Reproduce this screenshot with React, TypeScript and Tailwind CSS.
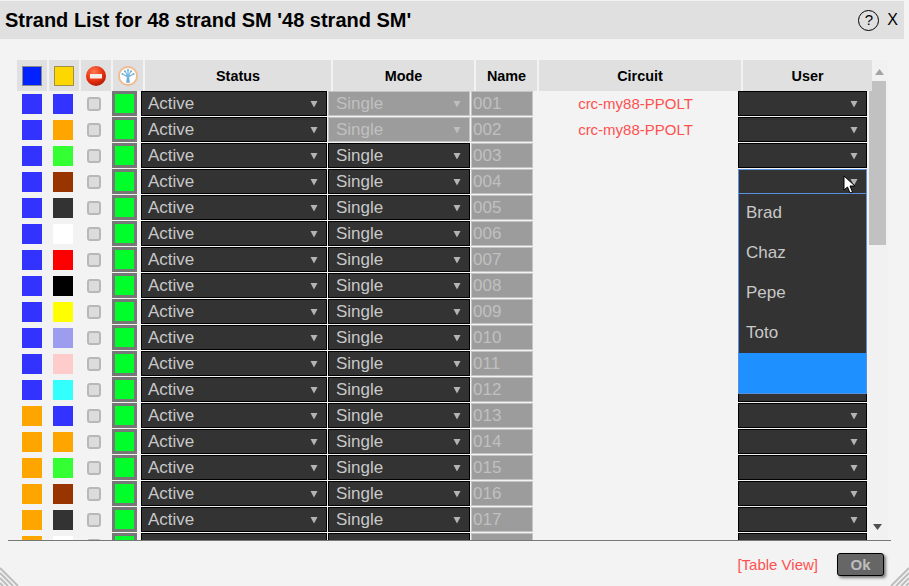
const fibers = ['#3333ff', '#ffa500', '#33ff33', '#993300'];
const tubes = ['#3333ff', '#ffa500', '#33ff33', '#993300', '#333333', '#ffffff', '#ff0000', '#000000', '#ffff00', '#9d9df0', '#ffcccc', '#33ffff'];

// only 17 rows fit, the 18th just peeks in under them with no text showing
const strands = Array.from({ length: 18 }, (_, i) => ({
  name: i < 17 ? String(i + 1).padStart(3, '0') : '',
  outer: fibers[Math.floor(i / 12)],
  inner: tubes[i % 12],
  circuit: i < 2 ? 'crc-my88-PPOLT' : '',
  locked: i < 2,
  focused: i === 3,
  peek: i === 17,
}));

function Arrow({ color = '#b4b4b4' }: { color?: string }) {
  return (
    <svg width="8" height="8" viewBox="0 0 8 8" className="shrink-0">
      <polygon points="0.5,1 7.5,1 4,7.500" fill={color} />
    </svg>
  );
}

function Select({ label, width, inset = 'pl-[6px]', locked, focused, bare }: { label?: string; width: string; inset?: string; locked?: boolean; focused?: boolean; bare?: boolean }) {
  const tone = locked
    ? 'bg-[#9c9c9c] border-[#c4c4c4] text-[#c0c0c0]'
    : focused
      ? 'bg-[#333333] border-[#5b8fe0] text-[#c8c8c8]'
      : 'bg-[#333333] border-black text-[#c8c8c8]';
  return (
    <div className={`${width} ${tone} ${inset} h-[25px] shrink-0 border flex items-center justify-between pr-[8px] text-[17px]`}>
      <span>{bare ? '' : label}</span>
      {!bare && <Arrow color={locked ? '#bdbdbd' : '#b4b4b4'} />}
    </div>
  );
}

function IconCell({ children }: { children: React.ReactNode }) {
  return <div className="w-[30px] h-[31px] shrink-0 bg-[#e0e0e0] flex items-center justify-center">{children}</div>;
}

function HeadCell({ width, children }: { width: string; children: React.ReactNode }) {
  return (
    <div className={`${width} h-[31px] shrink-0 bg-[#e0e0e0] flex items-center justify-center text-[14.4px] font-bold text-black`}>
      <span className="pt-[2px]">{children}</span>
    </div>
  );
}

function NoEntryIcon() {
  return (
    <svg width="20" height="20" viewBox="0 0 20 20">
      <defs>
        <radialGradient id="red" cx="40%" cy="30%" r="75%">
          <stop offset="0%" stopColor="#ff7a50" />
          <stop offset="60%" stopColor="#e8300f" />
          <stop offset="100%" stopColor="#a81806" />
        </radialGradient>
      </defs>
      <circle cx="10" cy="10" r="10" fill="url(#red)" />
      <rect x="4" y="8" width="12" height="4.5" fill="#f4eeea" />
    </svg>
  );
}

function TreeIcon() {
  return (
    <svg width="20" height="20" viewBox="0 0 20 20">
      <circle cx="10" cy="10" r="9" fill="#ffffff" stroke="#f2b98a" strokeWidth="1.800" />
      <path d="M8.500 16.500L9.200 11L5 8.500L9.300 9.800L7.500 6L9.800 9.300L10 4.500L10.200 9.300L12.500 6L10.700 9.800L15 8.500L10.800 11L11.500 16.500Z" fill="#6fb1de" stroke="#6fb1de" strokeWidth="0.700" />
      <g fill="#6fb1de">
        <circle cx="4.500" cy="8" r="1.100" />
        <circle cx="15.500" cy="8" r="1.100" />
        <circle cx="7" cy="5.300" r="1.100" />
        <circle cx="13" cy="5.300" r="1.100" />
        <circle cx="10" cy="4" r="1.100" />
      </g>
    </svg>
  );
}

function Hatch({ flip }: { flip?: boolean }) {
  return (
    <svg width="19" height="19" viewBox="0 0 19 19" className={`absolute bottom-0 ${flip ? 'right-0' : 'left-0 -scale-x-100'}`}>
      <path d="M19 1L1 19M19 6L6 19M19 11L11 19M19 16L16 19" stroke="#bdbdbd" strokeWidth="2" />
    </svg>
  );
}

export default function App() {
  return (
    <div className="relative w-[909px] h-[586px] overflow-hidden bg-[#f3f3f3] font-['Liberation_Sans',Arial,sans-serif] flex flex-col">
      <div className="mt-px mr-[5px] h-[38px] shrink-0 bg-[#e0e0e0] flex items-center pl-[5px] pr-[6px]">
        <h1 className="flex-1 text-[20px] font-bold text-black">Strand List for 48 strand SM '48 strand SM'</h1>
        <div className="w-[21px] h-[21px] rounded-full border border-black flex items-center justify-center text-[15px] text-black">?</div>
        <span className="ml-[8px] text-[16px] text-black">X</span>
      </div>

      <div className="mt-[21px] ml-[8px] w-[883px] border-b border-[#777777]">
        <div className="flex pl-[9px] gap-[2px]">
          <IconCell><div className="w-5 h-5 bg-[#0022ff] border border-[#8a8a8a]" /></IconCell>
          <IconCell><div className="w-5 h-5 bg-[#ffd700] border border-[#a09050]" /></IconCell>
          <IconCell><NoEntryIcon /></IconCell>
          <IconCell><TreeIcon /></IconCell>
          <HeadCell width="w-[186px]">Status</HeadCell>
          <HeadCell width="w-[141px]">Mode</HeadCell>
          <HeadCell width="w-[61px]">Name</HeadCell>
          <HeadCell width="w-[202px]">Circuit</HeadCell>
          <HeadCell width="w-[129px]">User</HeadCell>
          <div className="-ml-[2px] w-[16px] h-[31px] bg-[#f1f1f1] flex flex-col">
            <div className="h-[21px] flex justify-center pt-[9px] pr-px">
              <svg width="9" height="6" viewBox="0 0 9 6"><polygon points="0,6 9,6 4.500,0" fill="#a3a3a3" /></svg>
            </div>
            <div className="h-[10px] w-[14px] bg-[#c1c1c1]" />
          </div>
        </div>

        <div className="flex h-[449px]">
          <div className="w-[861px] overflow-hidden">
            {strands.map((s) => (
              <div key={s.inner + s.outer} className="flex items-center h-[26px] pb-px">
                <div className="ml-[14px] w-5 h-5 shrink-0" style={{ backgroundColor: s.outer }} />
                <div className="ml-[11px] w-5 h-5 shrink-0" style={{ backgroundColor: s.inner }} />
                <div className="ml-[14px] mt-px w-[14px] h-[14px] shrink-0 rounded-[3px] bg-[#dcdcdc] border-2 border-[#b8b8b8]" />
                <div className="ml-[11px] w-[25px] h-[25px] shrink-0 bg-[#00ff2a] border-[3px] border-[#777777]" />
                <div className="ml-[4px] flex gap-px">
                  <Select label="Active" width="w-[186px]" bare={s.peek} />
                  <Select label="Single" width="w-[142px]" inset="pl-[7px]" locked={s.locked} bare={s.peek} />
                </div>
                <div className="ml-px w-[62px] h-[25px] shrink-0 bg-[#9c9c9c] border border-[#c4c4c4] flex items-center pl-px text-[17px] text-[#c0c0c0]">{s.name}</div>
                <div className="w-[205px] shrink-0 pt-px text-center text-[15px] text-[#ff5050]">{s.circuit}</div>
                <Select width="w-[129px]" focused={s.focused} bare={s.peek} />
              </div>
            ))}
          </div>
          <div className="w-[19px] bg-[#f1f1f1] flex flex-col">
            <div className="h-[154px] w-[17px] shrink-0 bg-[#c1c1c1]" />
            <div className="mt-auto mb-[10px] pr-[2px] flex justify-center">
              <svg width="9" height="6" viewBox="0 0 9 6"><polygon points="0,0 9,0 4.500,6" fill="#505050" /></svg>
            </div>
          </div>
        </div>
      </div>

      <div className="flex items-center justify-end pr-[25px] pt-[11px]">
        <a className="pt-[2px] text-[15px] text-[#ff5050]">[Table View]</a>
        <button className="ml-[19px] w-[47px] h-[23px] rounded-[3px] bg-[#666666] border border-black shadow-[2px_2px_3px_rgba(0,0,0,0.5)] text-[15px] font-bold text-[#bdbdbd]">Ok</button>
      </div>

      {/* open user dropdown */}
      <div className="absolute left-[738px] top-[193px] w-[129px] h-[201px] bg-[#333333] border border-[#5b8fe0] flex flex-col text-[17px] text-[#c8c8c8]">
        {['Brad', 'Chaz', 'Pepe', 'Toto'].map((u) => (
          <div key={u} className="h-[40px] shrink-0 flex items-center pl-[7px] first:-mt-px first:pb-px">{u}</div>
        ))}
        <div className="flex-1 bg-[#1e90ff]" />
      </div>

      {/* mouse pointer */}
      <svg width="14" height="20" viewBox="0 0 14 20" className="absolute left-[843px] top-[175px]">
        <path d="M1 1V15L4.500 12L7 18L9.500 17L7 11H12Z" fill="#ffffff" stroke="#000000" strokeWidth="1" />
      </svg>

      <Hatch />
      <Hatch flip />
    </div>
  );
}
